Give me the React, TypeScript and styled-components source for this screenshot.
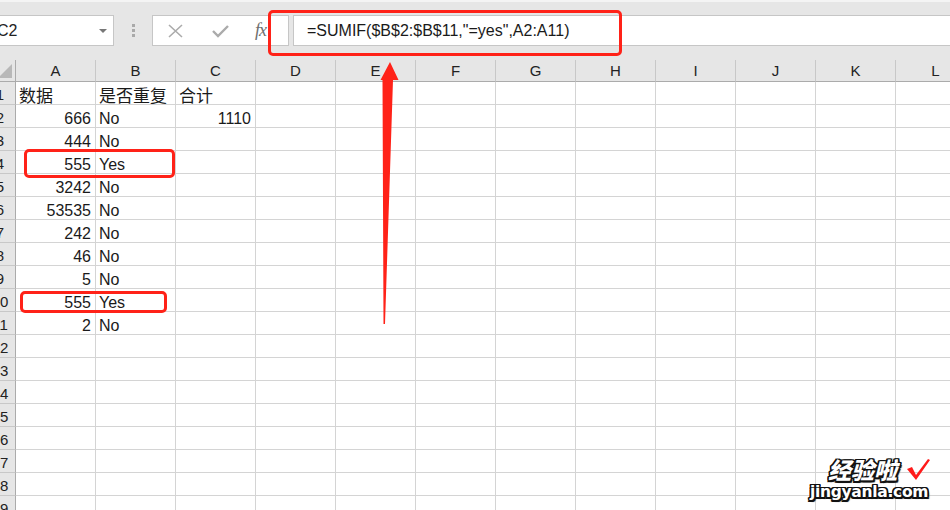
import React from "react";
import styled, { createGlobalStyle } from "styled-components";

const Global = createGlobalStyle`
  html, body { margin: 0; padding: 0; background: #ffffff; overflow: hidden; }
  #root { width: 950px; height: 510px; }
`;

const FONT = `"Liberation Sans", "Noto Sans CJK SC", Arial, sans-serif`;
const CJK = `"Noto Sans CJK SC", "Liberation Sans", sans-serif`;

const Page = styled.div`
  position: relative;
  width: 950px;
  height: 510px;
  overflow: hidden;
  background: #ffffff;
  font-family: ${FONT};
`;

const FormulaBar = styled.div`
  height: 60px;
  box-sizing: border-box;
  background: #e6e6e6;
  border-top: 2px solid #f4f4f4;
  display: flex;
  align-items: flex-start;
  padding-top: 13px;
`;

const NameBox = styled.div`
  margin-left: -12px;
  width: 126px;
  height: 31px;
  box-sizing: border-box;
  background: #fff;
  border: 1px solid #c6c6c6;
  display: flex;
  align-items: center;
  justify-content: space-between;
  padding: 0 6px 0 8px;
  font-size: 16px;
  color: #222;
`;

const DropArrow = styled.span`
  width: 0;
  height: 0;
  border-left: 4px solid transparent;
  border-right: 4px solid transparent;
  border-top: 4px solid #777;
`;

const Grip = styled.div`
  width: 38px;
  height: 31px;
  display: flex;
  flex-direction: column;
  align-items: center;
  justify-content: center;
  gap: 2px;
`;

const GripDot = styled.span`
  width: 3px;
  height: 3px;
  background: #a9a9a9;
`;

const FxBox = styled.div`
  width: 137px;
  height: 31px;
  box-sizing: border-box;
  background: #fff;
  border: 1px solid #c6c6c6;
  display: flex;
  align-items: center;
  padding-left: 15px;
`;

const IconSlot = styled.span<{ $w: number }>`
  width: ${(p) => p.$w}px;
  display: flex;
  align-items: center;
  justify-content: flex-start;
`;

const FxText = styled.span`
  font-family: "Liberation Serif", "DejaVu Serif", serif;
  font-style: italic;
  font-size: 18px;
  color: #6e6e6e;
  letter-spacing: -1px;
`;

const FormulaInput = styled.div`
  margin-left: 4px;
  flex: 1;
  height: 31px;
  box-sizing: border-box;
  background: #fff;
  border: 1px solid #c6c6c6;
  border-right: none;
  display: flex;
  align-items: center;
  padding-left: 13px;
  font-size: 16px;
  color: #1a1a1a;
  white-space: nowrap;
`;

const Sheet = styled.div`
  display: grid;
  grid-template-columns: 16px repeat(12, 80px);
  grid-template-rows: 22px repeat(19, 23px);
`;

const Corner = styled.div`
  background: #e6e6e6;
  border-right: 1px solid #ababab;
  border-bottom: 1px solid #ababab;
  box-sizing: border-box;
  position: relative;
  overflow: hidden;
`;

const CornerTri = styled.span`
  position: absolute;
  right: 3px;
  bottom: 3px;
  width: 0;
  height: 0;
  border-left: 14px solid transparent;
  border-bottom: 14px solid #b8b8b8;
`;

const ColHead = styled.div`
  background: #e6e6e6;
  box-sizing: border-box;
  border-right: 1px solid #c8c8c8;
  border-bottom: 1px solid #ababab;
  display: flex;
  align-items: center;
  justify-content: center;
  font-size: 15px;
  color: #222;
`;

const RowHead = styled.div`
  background: #e6e6e6;
  box-sizing: border-box;
  border-right: 1px solid #ababab;
  border-bottom: 1px solid #c8c8c8;
  display: flex;
  align-items: center;
  justify-content: flex-end;
  overflow: hidden;
  padding-top: 2px;
`;

const RowNum = styled.span`
  flex: none;
  width: 32px;
  text-align: center;
  font-size: 15px;
  color: #222;
  margin-right: -1px;
`;

const Cell = styled.div<{ $align?: "left" | "right" }>`
  box-sizing: border-box;
  border-right: 1px solid #d4d4d4;
  border-bottom: 1px solid #d4d4d4;
  display: flex;
  align-items: flex-end;
  justify-content: ${(p) => (p.$align === "right" ? "flex-end" : "flex-start")};
  padding: 0 4px 0 3px;
  font-size: 16px;
  color: #1a1a1a;
  white-space: nowrap;
  line-height: 16px;
`;

const CjkText = styled.span`
  font-family: ${CJK};
  font-size: 17px;
  line-height: 19px;
`;

const RedBox = styled.div<{ $l: number; $t: number; $w: number; $h: number }>`
  position: absolute;
  left: ${(p) => p.$l}px;
  top: ${(p) => p.$t}px;
  width: ${(p) => p.$w}px;
  height: ${(p) => p.$h}px;
  box-sizing: border-box;
  border: 3px solid #ff2218;
  border-radius: 5px;
  pointer-events: none;
`;

const ArrowSvg = styled.svg`
  position: absolute;
  left: 0;
  top: 0;
  width: 950px;
  height: 510px;
  pointer-events: none;
`;

const Watermark = styled.div`
  position: absolute;
  left: 810px;
  top: 456px;
  width: 140px;
  display: flex;
  flex-direction: column;
  align-items: flex-start;
  pointer-events: none;
`;

const WmTop = styled.div`
  display: flex;
  align-items: center;
  gap: 8px;
  margin-left: 18px;
`;

const outline = `
  text-shadow:
    -1.5px -1.5px 0 #111, 1.5px -1.5px 0 #111, -1.5px 1.5px 0 #111, 1.5px 1.5px 0 #111,
    0 -1.5px 0 #111, 0 1.5px 0 #111, -1.5px 0 0 #111, 1.5px 0 0 #111,
    2px 2px 1px #777;
`;

const WmCn = styled.span`
  font-family: ${CJK};
  font-weight: 900;
  font-size: 23px;
  font-style: italic;
  color: #fff;
  line-height: 26px;
  ${outline}
`;

const WmEn = styled.span`
  font-family: "DejaVu Sans", sans-serif;
  font-weight: 700;
  font-size: 15.5px;
  color: #fff;
  line-height: 18px;
  margin-top: 1px;
  letter-spacing: -0.3px;
  ${outline}
`;

const cols = ["A", "B", "C", "D", "E", "F", "G", "H", "I", "J", "K", "L"];

type CellVal = { t: string; align?: "left" | "right"; cjk?: boolean };
const data: Record<number, Record<number, CellVal>> = {
  1: {
    0: { t: "数据", cjk: true },
    1: { t: "是否重复", cjk: true },
    2: { t: "合计", cjk: true },
  },
  2: { 0: { t: "666", align: "right" }, 1: { t: "No" }, 2: { t: "1110", align: "right" } },
  3: { 0: { t: "444", align: "right" }, 1: { t: "No" } },
  4: { 0: { t: "555", align: "right" }, 1: { t: "Yes" } },
  5: { 0: { t: "3242", align: "right" }, 1: { t: "No" } },
  6: { 0: { t: "53535", align: "right" }, 1: { t: "No" } },
  7: { 0: { t: "242", align: "right" }, 1: { t: "No" } },
  8: { 0: { t: "46", align: "right" }, 1: { t: "No" } },
  9: { 0: { t: "5", align: "right" }, 1: { t: "No" } },
  10: { 0: { t: "555", align: "right" }, 1: { t: "Yes" } },
  11: { 0: { t: "2", align: "right" }, 1: { t: "No" } },
};

export default function App() {
  const rows = Array.from({ length: 19 }, (_, i) => i + 1);
  return (
    <Page>
      <Global />
      <FormulaBar>
        <NameBox>
          <span>C2</span>
          <DropArrow />
        </NameBox>
        <Grip>
          <GripDot />
          <GripDot />
          <GripDot />
        </Grip>
        <FxBox>
          <IconSlot $w={44}>
            <svg width="15" height="14" viewBox="0 0 15 14">
              <path d="M1 1 L14 13 M14 1 L1 13" stroke="#ababab" strokeWidth="1.6" fill="none" />
            </svg>
          </IconSlot>
          <IconSlot $w={43}>
            <svg width="17" height="14" viewBox="0 0 17 14">
              <path d="M1 7 L6 12 L16 2" stroke="#ababab" strokeWidth="2.4" fill="none" />
            </svg>
          </IconSlot>
          <FxText>fx</FxText>
        </FxBox>
        <FormulaInput>=SUMIF($B$2:$B$11,"=yes",A2:A11)</FormulaInput>
      </FormulaBar>
      <Sheet>
        <Corner>
          <CornerTri />
        </Corner>
        {cols.map((c) => (
          <ColHead key={c}>{c}</ColHead>
        ))}
        {rows.map((r) => (
          <React.Fragment key={r}>
            <RowHead>
              <RowNum>{r}</RowNum>
            </RowHead>
            {cols.map((c, ci) => {
              const v = data[r]?.[ci];
              return (
                <Cell key={c} $align={v?.align}>
                  {v ? v.cjk ? <CjkText>{v.t}</CjkText> : v.t : null}
                </Cell>
              );
            })}
          </React.Fragment>
        ))}
      </Sheet>

      <RedBox $l={268} $t={10} $w={354} $h={46} />
      <RedBox $l={24} $t={149} $w={151} $h={29} />
      <RedBox $l={20} $t={291} $w={147} $h={22} />

      <ArrowSvg viewBox="0 0 950 510">
        <polygon
          points="390,62 398.5,80 393,80 385,324 383.5,324 382.5,80 380.5,80"
          fill="#ff2218"
        />
      </ArrowSvg>

      <Watermark>
        <WmTop>
          <WmCn>经验啦</WmCn>
          <svg width="26" height="24" viewBox="0 0 26 24">
            <path d="M2 12 L7 10 L11 18 L23 2 L25 3 L11 23 Z" fill="#ff1a1a" />
          </svg>
        </WmTop>
        <WmEn>jingyanla.com</WmEn>
      </Watermark>
    </Page>
  );
}
